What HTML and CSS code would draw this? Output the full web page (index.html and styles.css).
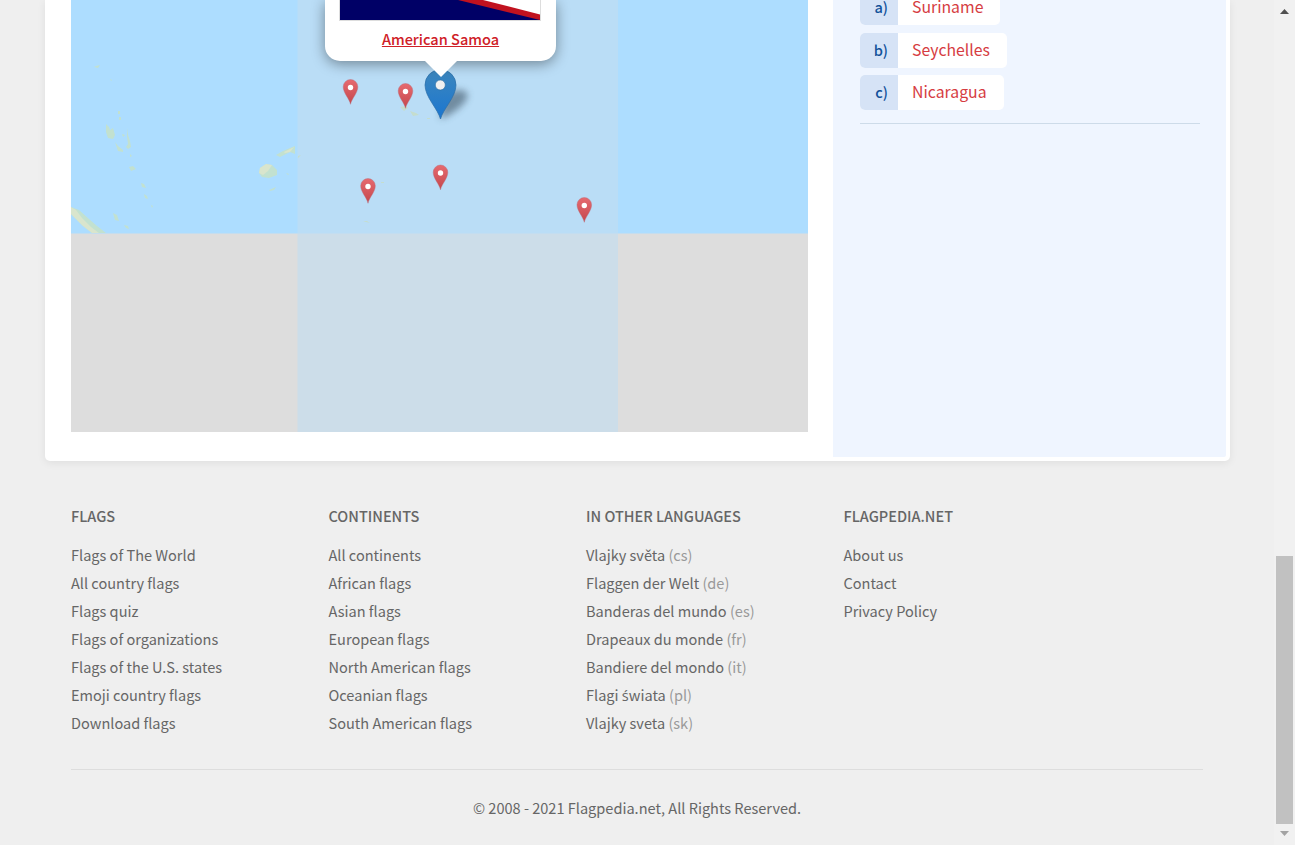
FILE: index.html
```
<!DOCTYPE html>
<html lang="en">
<head>
<meta charset="utf-8">
<title>Flagpedia.net</title>
<link rel="stylesheet" href="styles.css">
</head>
<body>
<div class="window">
<div class="page">
  <main class="card">
    <section class="map">
      <svg class="map-art" width="737" height="432" viewBox="71 0 737 432">
        <defs>
          <linearGradient id="red" x1="0" y1="0" x2="0" y2="1"><stop offset="0" stop-color="#e66a70"/><stop offset="1" stop-color="#c4474c"/></linearGradient>
          <linearGradient id="blue" x1="0" y1="0" x2="0" y2="1"><stop offset="0" stop-color="#3d87bd"/><stop offset="1" stop-color="#1b76d0"/></linearGradient>
          <filter id="soft" x="-50%" y="-50%" width="200%" height="200%"><feGaussianBlur stdDeviation="3.500"/></filter>
          <filter id="land" x="-5%" y="-5%" width="110%" height="110%"><feGaussianBlur stdDeviation="0.6"/></filter>
          <g id="pin">
            <path d="M0 .3C-1.200-5.500-7.300-11-7.300-17.200A7.300 7.300 0 0 1 7.300-17.200C7.300-11 1.200-5.500 0 .3Z" fill="url(#red)" stroke="#b76a78" stroke-opacity=".6" stroke-width=".7"/>
            <circle cy="-16.500" r="2.700" fill="#fff"/>
          </g>
        </defs>
        <rect x="71" width="737" height="432" fill="#ddd"/>
        <rect x="71" width="737" height="233.500" fill="#adddff"/>
        <g fill="#c2e1d0" filter="url(#land)">
          <path d="M71 207l8 3 10 9 8 7 9 7H92l-9-7-7-7-5-5Z"/>
          <path d="M71 207l5 3 6 8 9 9 8 6h-7l-9-7-7-7-5-5Z" fill="#d9e5cd"/>
          <path d="M106 124l3 3 1 3 3-2 2 7-2 4-5-1-2-6Z"/>
          <path d="M115 142l3 4 5 4v2l-5-1Z"/>
          <path d="M122 134l3 1-2 2ZM127 128l1 7 2 6 1 6-3 2-2-2 2-3-1-8ZM118 111h2v3h-2ZM119 117h2v3h-2ZM130 154l2 2-2 1ZM129 167l4-1 3 3-5 2ZM141 183l3 1 2 4-4-1ZM144 194l3 2 1 3-3-1ZM151 205l2 1-1 2ZM113 213l4 2 2 6-4-1ZM124 225l4 1 1 3-3-1ZM96 66l4-1-2 3-4-1ZM110 79l2 1-1 1Z"/>
          <path d="M259 173l1-5 6-4 6 1 5 5 0 5-8 3-7-1Z"/>
          <path d="M259 173l1-5 6-4 6 1-4 6-5 4Z" fill="#d9e5cd"/>
          <path d="M276 155l7-4 7-3 5-2v8l-5-2-10 5Z"/><path d="M284 152l10-5-4 5-5 1Z" fill="#d9e5cd"/>
          <path d="M269 190l7-3-2 3-4 1ZM286 173l3 1-1 1ZM297 158l3-3-1 2Z"/>
        </g>
        <rect x="297.500" width="320.500" height="432" fill="#c2ddf0" fill-opacity=".62"/>
        <g fill="#c5ddce" filter="url(#land)"><path d="M400 107l6-1 2 2-4 3ZM410 111l6 2 3 2-6 1ZM427 118h3v1h-3ZM363 221h4l3 2-4-1ZM381 182h3v1h-3ZM298 156l3-1-3 3Z"/></g>
        <path d="M440 119l4-23c6-5 18-9 23-3 4 7-14 22-27 26Z" fill="#34485a" opacity=".55" filter="url(#soft)"/>
        <use href="#pin" x="350.500" y="104"/><use href="#pin" x="405.500" y="108"/><use href="#pin" x="440.500" y="189.500"/><use href="#pin" x="368" y="203"/><use href="#pin" x="584.300" y="222"/>
        <path d="M440.500 119C438 109 425 97 425 85a15.500 15.500 0 0 1 31 0c0 12-13 24-15.500 34Z" fill="url(#blue)" stroke="#2d6fa7" stroke-width=".7"/>
        <circle cx="440.300" cy="85" r="5" fill="#f1f1f1" stroke="#2b6da0" stroke-width=".6"/>
      </svg>
      <div class="popup">
        <svg class="flag" width="202" height="21" viewBox="0 0 202 21">
          <rect width="202" height="21" fill="#ddd"/><rect x="1" width="200" height="20" fill="#006"/>
          <path d="M119 0H201V20Z" fill="#c1121f"/><path d="M144 0H201V14.500Z" fill="#fff"/>
        </svg>
        <a class="country">American Samoa</a>
      </div>
    </section>
    <aside class="quiz">
      <div class="option a"><b>a)</b><span>Suriname</span></div>
      <div class="option b"><b>b)</b><span>Seychelles</span></div>
      <div class="option c"><b>c)</b><span>Nicaragua</span></div>
      <hr class="quiz-line">
    </aside>
  </main>
  <footer class="footer">
    <div class="columns">
      <ul class="col"><li class="head">FLAGS</li><li>Flags of The World</li><li>All country flags</li><li>Flags quiz</li><li>Flags of organizations</li><li>Flags of the U.S. states</li><li>Emoji country flags</li><li>Download flags</li></ul>
      <ul class="col"><li class="head">CONTINENTS</li><li>All continents</li><li>African flags</li><li>Asian flags</li><li>European flags</li><li>North American flags</li><li>Oceanian flags</li><li>South American flags</li></ul>
      <ul class="col"><li class="head">IN OTHER LANGUAGES</li><li>Vlajky světa <i>(cs)</i></li><li>Flaggen der Welt <i>(de)</i></li><li>Banderas del mundo <i>(es)</i></li><li>Drapeaux du monde <i>(fr)</i></li><li>Bandiere del mondo <i>(it)</i></li><li>Flagi <span class="accent">ś</span>wiata <i>(pl)</i></li><li>Vlajky sveta <i>(sk)</i></li></ul>
      <ul class="col"><li class="head">FLAGPEDIA.NET</li><li>About us</li><li>Contact</li><li>Privacy Policy</li></ul>
    </div>
    <p class="copy">© 2008 - 2021 Flagpedia.net, All Rights Reserved.</p>
  </footer>
</div>
<div class="scrollbar">
  <svg width="9" height="5" viewBox="0 0 9 5"><path d="M0 5L4.500 0 9 5Z" fill="#505050"/></svg>
  <div class="thumb"></div>
  <svg width="9" height="5" viewBox="0 0 9 5"><path d="M0 0H9L4.500 5Z" fill="#a3a3a3"/></svg>
</div>
</div>
</body>
</html>
```
FILE: styles.css
```
* { box-sizing: border-box; }
body { margin: 0; background: #efefef; color: #666; font: 14.55px/28px "Noto Sans CJK SC", "Noto Sans", sans-serif; overflow: hidden; }
.window { display: flex; height: 845px; }
.page { flex: 1; padding-left: 45px; }
.card { display: flex; justify-content: space-between; width: 1185px; height: 461px; padding: 0 4px 4px 26px; background: #fff; border-radius: 0 0 5px 5px; box-shadow: 0 2px 8px rgba(0,0,0,.07); }
.map { position: relative; width: 737px; height: 432px; overflow: hidden; }
.map-art { display: block; }
.popup { position: absolute; left: 254px; top: 0; width: 231px; height: 61px; display: flex; flex-direction: column; align-items: center; background: #fff; border-radius: 0 0 15px 15px; box-shadow: 0 3px 14px rgba(0,0,0,.4); }
.popup::after { content: ""; position: absolute; left: 99px; top: 60px; border: 17px solid transparent; border-top-color: #fff; border-bottom: 0; }
.flag { display: block; margin-left: -1px; }
.country { color: #cf2027; font-size: 14.55px; line-height: 20px; margin-top: 8px; font-weight: 500; text-decoration: underline; }
.quiz { width: 393px; height: 457px; background: #eff5ff; padding: 0 27px; border-radius: 0 0 2px 0; }
.option { display: flex; width: max-content; height: 35px; background: #fff; border-radius: 5px; font-size: 15.8px; line-height: 33px; color: #d63c42; }
.option.a { height: 25px; line-height: 13px; margin-bottom: 8px; border-radius: 0 0 5px 5px; }
.option.b { margin-bottom: 7px; }
.option b { width: 38px; padding-right: 10px; text-align: right; background: #d6e3f6; color: #13529a; font-size: 14.6px; font-weight: 500; border-radius: 5px 0 0 5px; }
.option.a b { border-radius: 0 0 0 5px; }
.option span { padding: 0 17px 0 14px; }
.quiz-line { width: 340px; height: 1px; border: 0; background: #cddbe9; margin: 13px 0 0; }
.footer { width: 1132px; margin-left: 26px; padding-top: 41px; }
.columns { display: grid; grid-template-columns: repeat(4, 257.500px); height: 268px; border-bottom: 1px solid #ddd; }
.col { list-style: none; margin: 0; padding: 0; white-space: nowrap; }
.col .head { font-weight: 500; margin-bottom: 11px; font-size: 14.5px; }
.col i { font-style: normal; color: #999; }
.accent { font-family: "Open Sans", "Noto Sans", sans-serif; line-height: 1; }
.copy { margin: 24px 0 0; text-align: center; }
.scrollbar { width: 21px; height: 845px; background: #f1f1f1; display: flex; flex-direction: column; align-items: center; padding: 9px 2px 9px 2px; }
.thumb { width: 17px; height: 268px; background: #c1c1c1; margin: 542px 0 7px; flex: none; }
.scrollbar svg { flex: none; }
```
